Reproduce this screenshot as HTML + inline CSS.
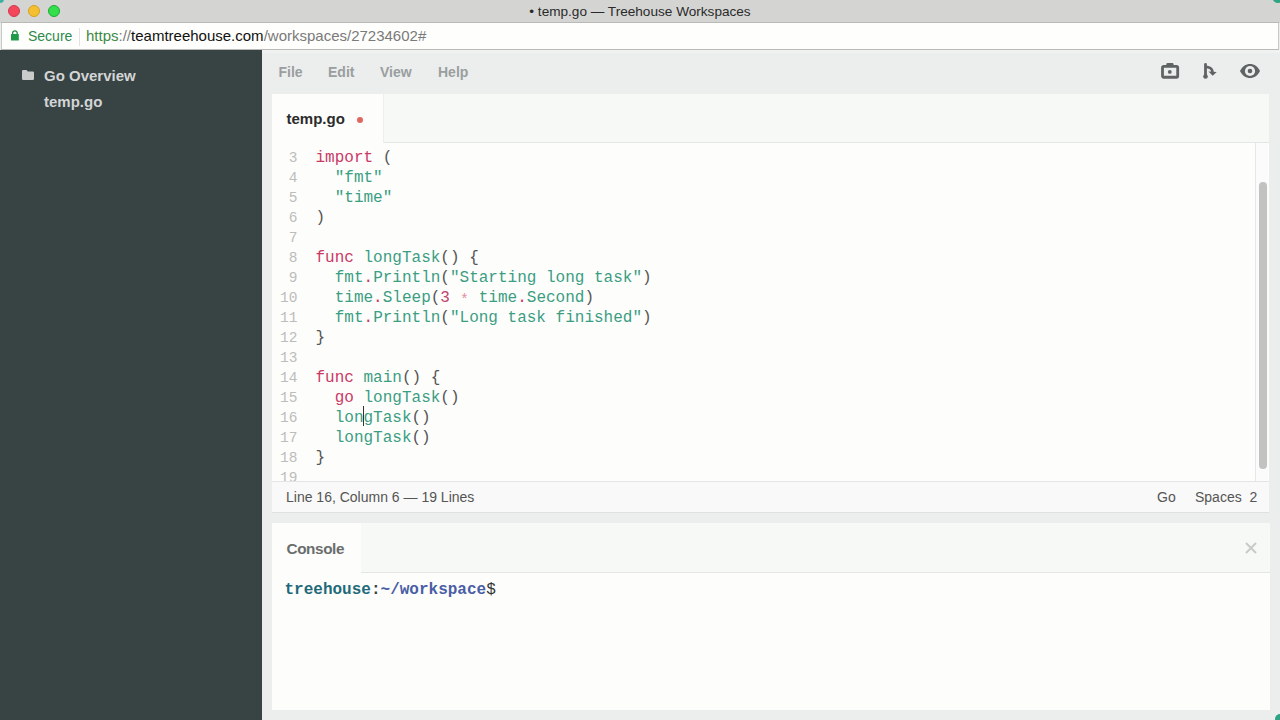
<!DOCTYPE html>
<html><head><meta charset="utf-8">
<style>
*{box-sizing:border-box;margin:0;padding:0}
html,body{width:1280px;height:720px;overflow:hidden;background:#ebeeed;font-family:"Liberation Sans",sans-serif}
.abs{position:absolute}
#title{left:0;top:0;width:1280px;height:23px;background:#d4d5d3}
#title .t{left:0;width:1280px;top:4px;text-align:center;font-size:13.6px;color:#2a2a2a;padding-left:0}
.light{width:12px;height:12px;border-radius:50%;top:4.7px}
#addr{left:1px;top:22px;width:1278px;height:28px;background:#fefefc;border-top:1px solid #b9bab8;border-bottom:1px solid #b9bab8;border-left:1px solid #c8c9c7;border-right:1px solid #c8c9c7}
#side{left:0;top:50px;width:262px;height:670px;background:#384344}
#main{left:262px;top:50px;width:1018px;height:670px;background:#ebeeed}
.menu{top:64px;font-size:14px;font-weight:bold;color:#9a9e9f}
#ed{left:272px;top:94px;width:997px;height:419px;background:#fdfdfb}
#edhead{left:272px;top:94px;width:997px;height:49px;background:#f7f9f7;border-bottom:1px solid #e4e6e5}
#tab{left:272px;top:94px;width:112px;height:49px;background:#fdfdfb;border-right:1px solid #eef0ef}
.code{font-family:"Liberation Mono",monospace;font-size:16px;line-height:20px;white-space:pre}
#gut{left:272px;top:147px;width:25.5px;text-align:right;color:#bcbcbc;font-size:14.5px !important}
#src{left:316px;top:147px;color:#555}
.k{color:#c93a66}.num{color:#c0446c}.ast{color:#e58a9e;display:inline-block;width:9.6px;font-size:14px;position:relative;top:2px;text-align:center}.i{color:#3b9e83}.p{color:#555}.n{color:#d1356a}
#status{left:272px;top:481px;width:997px;height:32px;background:#f8f9f8;border-top:1px solid #e3e5e4;border-bottom:1px solid #dfe1e0;font-size:14px;color:#555}
#con{left:272px;top:523px;width:998px;height:187px;background:#fdfdfb}
#conhead{left:272px;top:523px;width:998px;height:50px;background:#f7f9f7;border-bottom:1px solid #e4e6e5}
#contab{left:272px;top:523px;width:89px;height:50px;background:#fdfdfb}
</style></head><body>
<div id="title" class="abs">
  <div class="abs light" style="left:8px;background:#f4475c;border:1px solid #cf3a4d"></div>
  <div class="abs light" style="left:28px;background:#f5c02f;border:1px solid #d6a024"></div>
  <div class="abs light" style="left:48px;background:#33e04b;border:1px solid #22a834"></div>
  <div class="abs t">• temp.go — Treehouse Workspaces</div>
  <div class="abs" style="left:-4px;top:-5px;width:8px;height:8px;border-radius:50%;background:#3fb0a0"></div>
  <div class="abs" style="left:1273px;top:-5px;width:10px;height:8px;border-radius:50%;background:#2fa383"></div>
</div>
<div id="addr" class="abs">
  <svg class="abs" style="left:9px;top:7px" width="8" height="11" viewBox="0 0 8 11"><path d="M1.6 4.5V3.1a2.3 2.3 0 0 1 4.6 0V4.5" fill="none" stroke="#1f8f45" stroke-width="1.3"/><rect x="0" y="4" width="7.8" height="6.6" rx="0.6" fill="#1f9a4a"/></svg>
  <div class="abs" style="left:26px;top:5px;font-size:14px;color:#2c8a4a">Secure</div>
  <div class="abs" style="left:77px;top:5px;width:1px;height:18px;background:#e2e2e2"></div>
  <div class="abs" style="left:84px;top:4px;font-size:15px;color:#7a7a7a"><span style="color:#3d8a45">https</span>://<span style="color:#111">teamtreehouse.com</span>/workspaces/27234602#</div>
</div>
<div id="side" class="abs">
  <svg class="abs" style="left:22px;top:20px" width="12" height="10" viewBox="0 0 12 10"><path d="M0 1.2a1.2 1.2 0 0 1 1.2-1.2h3.3l1.3 1.4h5a1.2 1.2 0 0 1 1.2 1.2v6.2a1.2 1.2 0 0 1-1.2 1.2H1.2A1.2 1.2 0 0 1 0 8.8z" fill="#c9cbcb"/></svg>
  <div class="abs" style="left:44px;top:17px;font-size:15px;font-weight:bold;color:#d3d5d5">Go Overview</div>
  <div class="abs" style="left:44px;top:43px;font-size:15px;font-weight:bold;color:#d3d5d5">temp.go</div>
</div>
<div id="main" class="abs"></div>
<div class="abs" style="left:262px;top:50px;width:1018px;height:3px;background:#f0f2f1"></div>
<div class="abs menu" style="left:278.5px">File</div>
<div class="abs menu" style="left:328px">Edit</div>
<div class="abs menu" style="left:380px">View</div>
<div class="abs menu" style="left:438px">Help</div>

<div id="ed" class="abs"></div>
<div id="edhead" class="abs"></div>
<div id="tab" class="abs">
  <div class="abs" style="left:14.5px;top:16px;font-size:15px;font-weight:bold;color:#2b2b2b">temp.go</div>
  <div class="abs" style="left:85px;top:23px;width:6px;height:6px;border-radius:50%;background:#e0675e"></div>
</div>
<div class="abs" style="left:272px;top:143px;width:997px;height:338px;overflow:hidden">
<div id="gut" class="abs code" style="left:0;top:5px">3
4
5
6
7
8
9
10
11
12
13
14
15
16
17
18
19</div>
<div id="src" class="abs code" style="left:43.5px;top:5px"><span class="k">import</span> (
  <span class="i">"fmt"</span>
  <span class="i">"time"</span>
)

<span class="k">func</span> <span class="i">longTask</span>() {
  <span class="i">fmt</span><span class="n">.</span><span class="i">Println</span>(<span class="i">"Starting long task"</span>)
  <span class="i">time</span><span class="n">.</span><span class="i">Sleep</span>(<span class="num">3</span> <span class="ast">*</span> <span class="i">time</span><span class="n">.</span><span class="i">Second</span>)
  <span class="i">fmt</span><span class="n">.</span><span class="i">Println</span>(<span class="i">"Long task finished"</span>)
}

<span class="k">func</span> <span class="i">main</span>() {
  <span class="k">go</span> <span class="i">longTask</span>()
  <span class="i">longTask</span>()
  <span class="i">longTask</span>()
}
</div>
<div class="abs" style="left:91px;top:263px;width:1px;height:20px;background:#333"></div>
<div class="abs" style="left:983px;top:0;width:13px;height:338px;background:#fafbfa;border-left:1px solid #e6e7e6"></div>
<div class="abs" style="left:987px;top:39px;width:8px;height:287px;border-radius:4px;background:#c2c3c1"></div>
</div>
<div id="status" class="abs">
  <div class="abs" style="left:14px;top:7px">Line 16, Column 6 — 19 Lines</div>
  <div class="abs" style="left:885px;top:7px">Go</div>
  <div class="abs" style="left:923px;top:7px">Spaces&nbsp; 2</div>
</div>

<div id="con" class="abs"></div>
<div id="conhead" class="abs"></div>
<div id="contab" class="abs">
  <div class="abs" style="left:14.5px;top:17px;font-size:15.3px;letter-spacing:-0.4px;font-weight:bold;color:#6a6d6e">Console</div>
</div>
<svg class="abs" style="left:1245px;top:542px" width="12" height="12" viewBox="0 0 12 12"><path d="M1 1l10 10M11 1L1 11" stroke="#c8caca" stroke-width="2"/></svg>
<div class="abs code" style="left:284.5px;top:580px;font-weight:bold;font-size:16px"><span style="color:#1f6a7a">treehouse</span><span style="color:#3a3f44">:</span><span style="color:#4a5ea6">~/workspace</span><span style="color:#333;font-weight:normal">$</span></div>

<!-- toolbar icons -->
<svg class="abs" style="left:1160px;top:62px" width="20" height="18" viewBox="0 0 20 18">
  <path d="M6.3 3.6V2.4A1.4 1.4 0 0 1 7.7 1h4.5a1.4 1.4 0 0 1 1.4 1.4v1.2z" fill="#5f6364"/>
  <rect x="2.5" y="4.4" width="15.2" height="10.85" rx="1.2" fill="none" stroke="#5f6364" stroke-width="2.8"/>
  <circle cx="9.8" cy="9.9" r="1.9" fill="#5f6364"/>
</svg>
<svg class="abs" style="left:1200px;top:62px" width="20" height="18" viewBox="0 0 20 18">
  <path d="M5.5 2.5v12" stroke="#5f6364" stroke-width="2.8" stroke-linecap="round"/>
  <circle cx="5.5" cy="14.5" r="2.3" fill="#5f6364"/>
  <path d="M5.5 4.8C9 4.8 12.5 6.5 12.5 10" fill="none" stroke="#5f6364" stroke-width="2.8"/>
  <path d="M8.4 9.6L16.7 9.9 12.7 13.8z" fill="#5f6364"/>
</svg>
<svg class="abs" style="left:1239px;top:63px" width="22" height="16" viewBox="0 0 22 16">
  <path d="M1 8C3.2 3.6 6.8 1 11 1S18.8 3.6 21 8C18.8 12.4 15.2 15 11 15S3.2 12.4 1 8z" fill="#5f6364"/>
  <circle cx="11" cy="8" r="5.1" fill="#ebeeed"/>
  <circle cx="11" cy="8" r="2.3" fill="#5f6364"/>
</svg>
<div class="abs" style="left:1275px;top:714px;width:10px;height:10px;border-radius:50%;background:#2fa383"></div>
</body></html>
